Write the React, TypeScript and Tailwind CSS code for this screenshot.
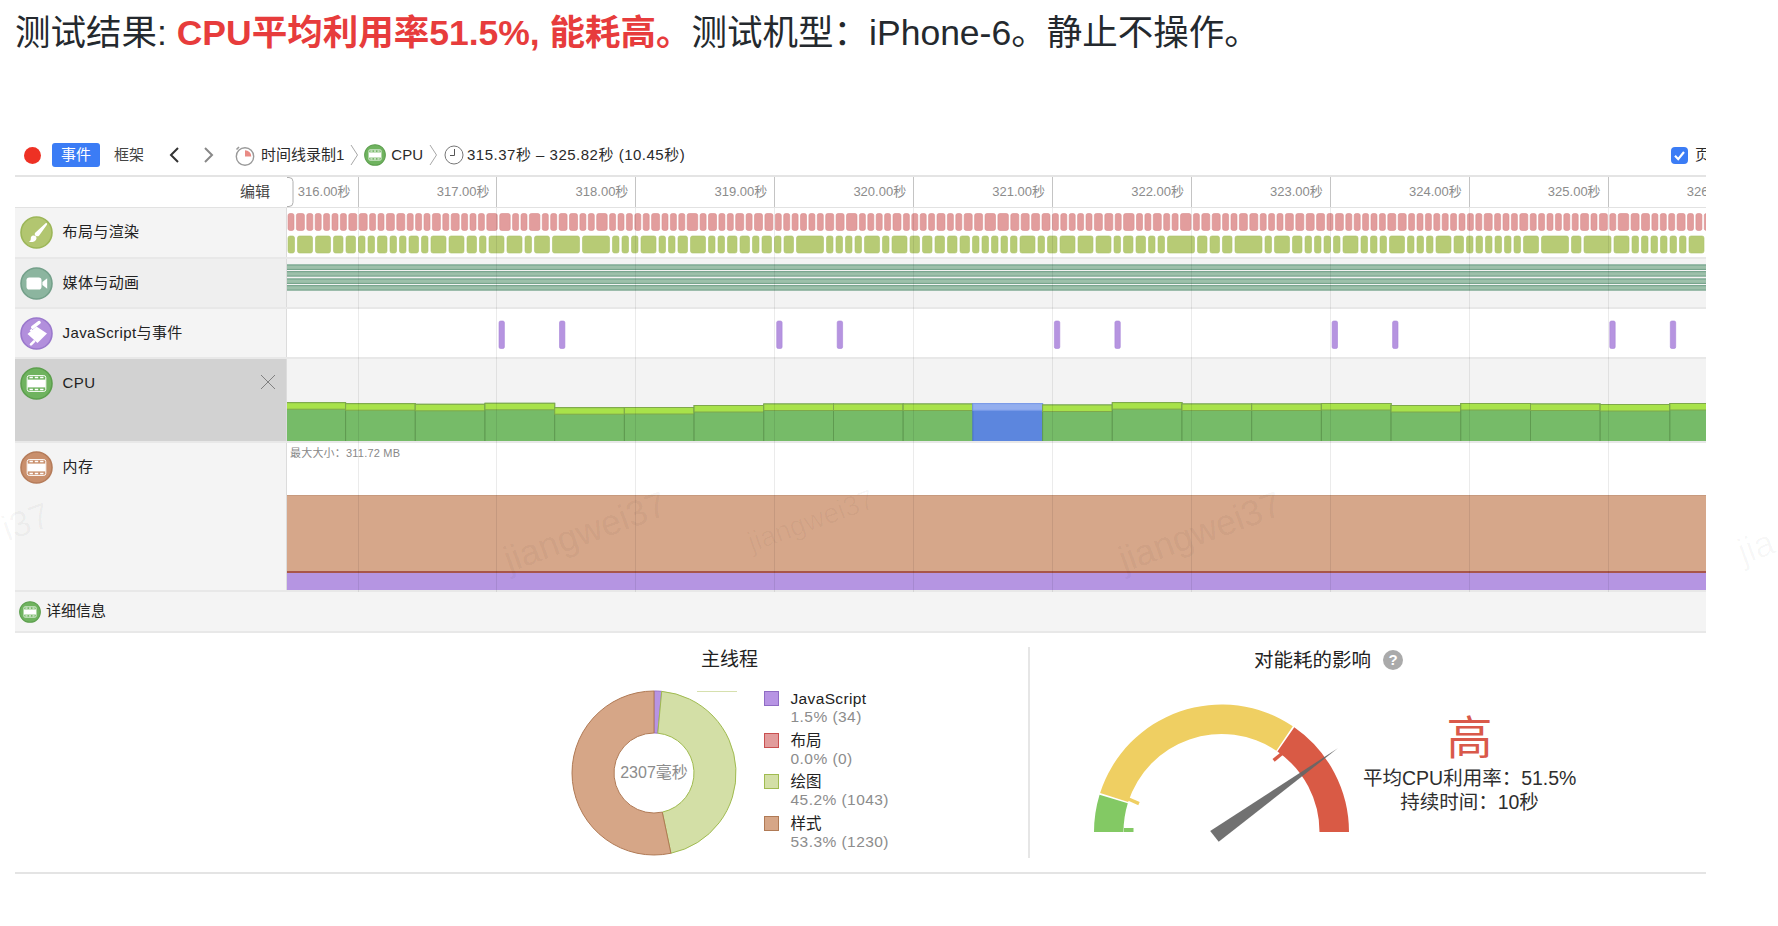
import React from 'react';

const TICKS = [71.6, 210.5, 349.4, 488.3, 627.2, 766.1, 905, 1043.9, 1182.8, 1321.7];
const TIME_LABELS = ['317.00秒', '318.00秒', '319.00秒', '320.00秒', '321.00秒', '322.00秒', '323.00秒', '324.00秒', '325.00秒', '326.00秒'];
const CPU_TOPS = [43.7, 44.7, 45.3, 44.3, 48.7, 48.5, 46.5, 45, 45, 45, 44.7, 46, 43.6, 45, 45, 44.5, 46.5, 44.5, 45, 45.5, 44.5];
const JS_BARS = [212, 272.5, 489.7, 550.2, 767.4, 827.9, 1045.1, 1105.6, 1322.8, 1383.3];

// stable fake trace, so every run draws the same bars
function makeBars(seed: number, pick: (r: number) => number, gap: number) {
  const bars: { x: number; w: number }[] = [];
  let s = seed;
  let x = 1;
  while (x < 1419) {
    s = (s * 9301 + 49297) % 233280;
    const w = pick(s / 233280);
    bars.push({ x, w });
    x += w + gap;
  }
  return bars;
}

const RED_BARS = makeBars(7, (r) => (r < 0.55 ? 6 : r < 0.9 ? 8 : 10.5), 2.4);
const GREEN_BARS = makeBars(23, (r) => (r < 0.55 ? 6.5 : r < 0.75 ? 9.5 : r < 0.94 ? 15 : 27), 3);

function sector(cx: number, cy: number, r0: number, r1: number, a0: number, a1: number) {
  const p = (r: number, a: number) => {
    const t = (a * Math.PI) / 180;
    return `${(cx + r * Math.cos(t)).toFixed(2)} ${(cy - r * Math.sin(t)).toFixed(2)}`;
  };
  const large = Math.abs(a1 - a0) > 180 ? 1 : 0;
  return `M${p(r1, a0)}A${r1} ${r1} 0 ${large} 1 ${p(r1, a1)}L${p(r0, a1)}A${r0} ${r0} 0 ${large} 0 ${p(r0, a0)}Z`;
}

function FilmIcon({ fill, ring, className }: { fill: string; ring: string; className: string }) {
  return (
    <svg viewBox="0 0 33 33" className={className}>
      <circle cx="16.5" cy="16.5" r="15.5" fill={fill} stroke={ring} strokeWidth="1.6" />
      <rect x="7.2" y="8.6" width="18.6" height="15.8" rx="2" fill="none" stroke="#fff" strokeWidth="1" />
      <rect x="7.5" y="12.6" width="18" height="7.8" fill="#fff" />
      <path d="M9.5 10.6h3.4M14.8 10.6h3.4M20.1 10.6h3.4M9.5 22.4h3.4M14.8 22.4h3.4M20.1 22.4h3.4" stroke="#fff" strokeWidth="1.5" />
    </svg>
  );
}

function BrushIcon() {
  return (
    <svg viewBox="0 0 33 33" className="h-[33px] w-[33px] shrink-0">
      <circle cx="16.5" cy="16.5" r="15.5" fill="#b2c670" stroke="#9cb658" strokeWidth="1.6" />
      <path d="M25.6 7.2c1.2-.6 1.9.3 1.3 1.5L19.2 19.4c-.8 1-2.2 1.3-3.4.5s-1.4-2.2-.6-3.2z" fill="#fff" />
      <path d="M12.8 19.6c2.1-.6 3.9.9 3.7 2.8-.3 2.6-3.6 4.1-7.8 3.5 1.8-.9 2.1-2.1 2.1-3.5 0-1.3.8-2.4 2-2.8z" fill="#fff" />
    </svg>
  );
}

function VideoIcon() {
  return (
    <svg viewBox="0 0 33 33" className="h-[33px] w-[33px] shrink-0">
      <circle cx="16.5" cy="16.5" r="15.5" fill="#8cb59f" stroke="#74a08a" strokeWidth="1.6" />
      <rect x="6.5" y="10.5" width="15" height="12" rx="2.8" fill="#fff" />
      <path d="M22.4 15l4.8-3.8v10.6l-4.8-3.8z" fill="#fff" />
    </svg>
  );
}

function ScrollIcon() {
  return (
    <svg viewBox="0 0 33 33" className="h-[33px] w-[33px] shrink-0">
      <circle cx="16.5" cy="16.5" r="15.5" fill="#b28fdc" stroke="#9a78cc" strokeWidth="1.6" />
      <path d="M7.5 17L16.5 9.5l10.5 7-9.5 9.5z" fill="#fff" />
      <path d="M12.6 10.4l6.6-5" stroke="#fff" strokeWidth="3.2" strokeLinecap="round" />
      <path d="M10.5 12.6l2.6 2.6" stroke="#fff" strokeWidth="2.4" />
      <path d="M11 27.4l3-3" stroke="#fff" strokeWidth="2.6" strokeLinecap="round" />
    </svg>
  );
}

function CrumbArrow() {
  return (
    <svg viewBox="0 0 9 22" className="h-[22px] w-[9px] shrink-0">
      <path d="M1 1l6.5 10L1 21" fill="none" stroke="#a8a8a8" strokeWidth="1" />
    </svg>
  );
}

function Toolbar() {
  return (
    <div className="flex h-[46px] items-center border-b-2 border-[#e4e4e4] pt-[4px] text-[15px] text-[#2a2a2a]">
      <span className="ml-[9px] h-[17px] w-[17px] shrink-0 rounded-full bg-[#ee3124]" />
      <span className="ml-[11px] flex h-[24px] w-[48px] items-center justify-center rounded-[3px] bg-[#3b7cf5] text-white">事件</span>
      <span className="ml-[14px] text-[#444]">框架</span>
      <svg viewBox="0 0 12 18" className="ml-[24px] h-[18px] w-[12px]">
        <path d="M10 2L3 9l7 7" fill="none" stroke="#333" strokeWidth="2" />
      </svg>
      <svg viewBox="0 0 12 18" className="ml-[23px] h-[18px] w-[12px]">
        <path d="M2 2l7 7-7 7" fill="none" stroke="#888" strokeWidth="2" />
      </svg>
      <svg viewBox="0 0 20 21" className="ml-[20px] h-[21px] w-[20px]">
        <circle cx="10" cy="11.5" r="8.7" fill="#fff" stroke="#9a9a9a" strokeWidth="1.4" />
        <path d="M10 11.5V5.2a6.3 6.3 0 0 1 6.3 6.3z" fill="#e98b85" />
        <path d="M1.5 4.5l2.5-2.5" stroke="#9a9a9a" strokeWidth="1.6" />
      </svg>
      <span className="ml-[6px]">时间线录制1</span>
      <span className="ml-[6px]"><CrumbArrow /></span>
      <FilmIcon fill="#6fb35f" ring="#5c9f4d" className="ml-[5px] h-[22px] w-[22px] shrink-0" />
      <span className="ml-[5px]">CPU</span>
      <span className="ml-[6px]"><CrumbArrow /></span>
      <svg viewBox="0 0 20 20" className="ml-[6px] h-[20px] w-[20px]">
        <circle cx="10" cy="10" r="9" fill="#fff" stroke="#777" strokeWidth="1" />
        <path d="M10.5 4v6.5H6" fill="none" stroke="#555" strokeWidth="1" />
      </svg>
      <span className="ml-[3px] tracking-[0.5px]">315.37秒 – 325.82秒 (10.45秒)</span>
      <svg viewBox="0 0 17 17" className="ml-auto h-[17px] w-[17px] shrink-0">
        <rect width="17" height="17" rx="4" fill="#3b7cf5" />
        <path d="M4 8.8l3.2 3.4L13 5" fill="none" stroke="#fff" strokeWidth="2.2" />
      </svg>
      <span className="ml-[7px] w-[11px] overflow-hidden whitespace-nowrap">页面</span>
    </div>
  );
}

function TimeHeader() {
  return (
    <div className="flex h-[31px] border-b border-[#e2e2e2] text-[13px]">
      <div className="flex w-[272px] shrink-0 items-center justify-end pr-[17px] text-[15px] text-[#444]">编辑</div>
      <div className="relative flex min-w-0 flex-1 overflow-hidden text-[#8c8c8c]">
        <div className="flex w-[71.6px] shrink-0 items-center justify-end border-r border-[#c4c4c4] pr-[7px]">316.00秒</div>
        {TIME_LABELS.map((label) => (
          <div key={label} className="flex w-[138.9px] shrink-0 items-center justify-end border-r border-[#c4c4c4] pr-[7px]">{label}</div>
        ))}
        <svg viewBox="0 0 7 30" className="absolute left-0 top-0 h-[30px] w-[7px]">
          <path d="M0 .5h2q4 0 4 4v21q0 4-4 4H0" fill="#fff" stroke="#b0b0b0" />
        </svg>
      </div>
    </div>
  );
}

function Row({ icon, label, selected, track, height, trackBg, leftBg }: {
  icon: React.ReactNode;
  label: string;
  selected?: boolean;
  track: React.ReactNode;
  height: string;
  trackBg: string;
  leftBg: string;
}) {
  return (
    <div className={`flex border-b-2 border-[#e8e8e8] ${height}`}>
      <div className={`relative flex w-[272px] shrink-0 items-start gap-[9.5px] border-r border-[#dcdcdc] pl-[5px] pt-[8px] ${leftBg}`}>
        {icon}
        <span className="pt-[6px] text-[15px] leading-[20px] tracking-[0.4px] text-[#222]">{label}</span>
        {selected && (
          <svg viewBox="0 0 16 16" className="absolute right-[10px] top-[15px] h-[16px] w-[16px]">
            <path d="M1 1l14 14M15 1L1 15" stroke="#808080" strokeWidth="1" />
          </svg>
        )}
      </div>
      <div className={`relative min-w-0 flex-1 overflow-hidden ${trackBg}`}>{track}</div>
    </div>
  );
}

function RenderTrack() {
  return (
    <svg viewBox="0 0 1419 49" className="block h-[49px] w-[1419px]">
      {RED_BARS.map((b) => (
        <rect key={b.x} x={b.x} y="5.5" width={b.w} height="17" rx="2" fill="#e29d9d" stroke="#d98d8d" strokeWidth=".6" />
      ))}
      {GREEN_BARS.map((b) => (
        <rect key={b.x} x={b.x} y="28" width={b.w} height="17" rx="2" fill="#b7cb75" stroke="#adc26b" strokeWidth=".6" />
      ))}
    </svg>
  );
}

function MediaTrack() {
  return (
    <svg viewBox="0 0 1419 48" className="block h-[48px] w-[1419px]">
      {[5.5, 12.2, 19.5, 26.2].map((y) => (
        <g key={y}>
          <rect x="0" y={y} width="1419" height="5" fill="#9dc0aa" />
          <rect x="0" y={y} width="1419" height="1" fill="#6f9f87" />
          <rect x="0" y={y + 4.4} width="1419" height="1" fill="#6f9f87" />
        </g>
      ))}
    </svg>
  );
}

function ScriptTrack() {
  return (
    <svg viewBox="0 0 1419 48" className="block h-[48px] w-[1419px]">
      {JS_BARS.map((x) => (
        <rect key={x} x={x} y="12" width="5.4" height="27.5" rx="1.6" fill="#b694e0" stroke="#a884d8" strokeWidth=".6" />
      ))}
    </svg>
  );
}

function CpuTrack() {
  return (
    <svg viewBox="0 0 1419 82" className="block h-[82px] w-[1419px]">
      {CPU_TOPS.map((top, i) => {
        const x = 58.6 + 69.7 * (i - 1);
        const blue = i === 10;
        return (
          <g key={i} stroke={blue ? '#4a72d8' : '#5f9a50'} strokeWidth="1">
            <rect x={x} y={top} width="69.7" height={83 - top} fill={blue ? '#5c86de' : '#76bb68'} />
            <rect x={x} y={top} width="69.7" height="6.5" fill={blue ? '#93aeee' : '#a8e24a'} stroke={blue ? '#7f9eea' : '#7fa84a'} />
          </g>
        );
      })}
    </svg>
  );
}

function MemoryTrack() {
  return (
    <>
      <div className="pl-[3px] pt-[3px] text-[11px] leading-[15px] tracking-[0.2px] text-[#888]">最大大小：311.72 MB</div>
      <div className="mt-[34px] h-[76px] border-t border-[#c79a7e] bg-[#d6a78a]" />
      <div className="h-[2px] bg-[#a8564a]" />
      <div className="h-[18px] bg-[#b595e2]" />
    </>
  );
}

function MainThread() {
  const legend = [
    { name: 'JavaScript', value: '1.5% (34)', swatch: 'border-[#8f6cc4] bg-[#b794e4]', name2: 'tracking-[0.35px]' },
    { name: '布局', value: '0.0% (0)', swatch: 'border-[#c95050] bg-[#e29c9c]', name2: '' },
    { name: '绘图', value: '45.2% (1043)', swatch: 'border-[#a0bb50] bg-[#d3dfa6]', name2: '' },
    { name: '样式', value: '53.3% (1230)', swatch: 'border-[#b07a55] bg-[#d6a687]', name2: '' },
  ];
  return (
    <div className="h-full w-[1013px] shrink-0 pt-[15px]">
      <div className="h-[24px] pl-[686px] text-[19px] leading-[24px] text-[#222]">主线程</div>
      <div className="mt-[18px] flex pl-[555px]">
        <div className="relative h-[168px] w-[172px] shrink-0">
          <svg viewBox="0 0 172 168" className="h-[168px] w-[172px]">
            <path d={sector(84, 83, 40, 82, 90, 84.6)} fill="#b794e4" stroke="#9a72c8" />
            <path d={sector(84, 83, 40, 82, 84.6, -78.1)} fill="#d3dfa6" stroke="#a0bb50" />
            <path d={sector(84, 83, 40, 82, -78.1, -270)} fill="#d6a687" stroke="#b07a55" />
            <path d="M127 1.5h40" stroke="#d6e0ae" />
          </svg>
          <span className="absolute left-[44px] top-[73px] w-[80px] text-center text-[16px] leading-[20px] text-[#8c8c8c]">2307毫秒</span>
        </div>
        <div className="ml-[22px] w-[200px]">
          {legend.map((item) => (
            <div key={item.name} className="flex h-[41.6px] gap-[11.5px]">
              <span className={`mt-[1px] h-[15px] w-[15px] shrink-0 border-[1.5px] ${item.swatch}`} />
              <div className="text-[15.5px] leading-[18px]">
                <div className={`text-[#222] ${item.name2}`}>{item.name}</div>
                <div className="tracking-[0.45px] text-[#8c8c8c]">{item.value}</div>
              </div>
            </div>
          ))}
        </div>
      </div>
    </div>
  );
}

function EnergyImpact() {
  return (
    <div className="h-full min-w-0 flex-1 pt-[15px]">
      <div className="flex h-[24px] items-center pl-[224px]">
        <span className="text-[19.5px] leading-[24px] text-[#222]">对能耗的影响</span>
        <span className="ml-[12px] flex h-[20px] w-[20px] items-center justify-center rounded-full bg-[#aaaaaa] text-[15px] font-bold text-white">?</span>
      </div>
      <div className="mt-[29px] flex pl-[60px]">
        <svg viewBox="0 0 262 145" className="h-[145px] w-[262px] shrink-0">
          <path d={sector(131.5, 131, 98, 127.5, 180, 163)} fill="#83c964" />
          <path d={sector(131.5, 131, 98, 127.5, 162.2, 56)} fill="#efcf62" />
          <path d={sector(131.5, 131, 98, 127.5, 55.2, 0)} fill="#d95a45" />
          <rect x="34" y="127" width="9.5" height="4" fill="#83c964" />
          <path d="M38.5 98l10.5 4.6" stroke="#efcf62" strokeWidth="3.5" />
          <path d="M192 52.5l-8.4 6.8" stroke="#d95a45" strokeWidth="3.5" />
          <path d="M247.8 47.3L120.2 130l8.5 10.7z" fill="#666" fillOpacity=".93" />
        </svg>
        <div className="ml-[11px] w-[213px] pt-[15px] text-center text-[19.5px] leading-[24px] text-[#2e2e2e]">
          <div className="h-[50px] text-[46px] leading-[44px] text-[#d9594a]">高</div>
          <div className="whitespace-nowrap">平均CPU利用率：51.5%</div>
          <div className="whitespace-nowrap">持续时间：10秒</div>
        </div>
      </div>
    </div>
  );
}

const WATERMARKS = [
  { text: 'jiangwei37', cls: 'left-[500px] top-[505px] text-[36px] text-black/[0.05]' },
  { text: 'jiangwei37', cls: 'left-[745px] top-[500px] text-[28px] text-black/[0.03]' },
  { text: 'jiangwei37', cls: 'left-[1115px] top-[505px] text-[36px] text-black/[0.05]' },
  { text: 'jia', cls: 'left-[1738px] top-[520px] text-[36px] text-black/[0.03]' },
  { text: 'i37', cls: 'left-[2px] top-[495px] text-[36px] text-black/[0.035]' },
  { text: 'wei37dengshuhai17-701687', cls: 'left-[40px] top-[430px] text-[24px] text-black/[0.025]' },
  { text: 'dengshuhai17-701687', cls: 'left-[1310px] top-[700px] text-[24px] text-black/[0.015]' },
  { text: 'jiangwei37-701687', cls: 'left-[840px] top-[690px] text-[28px] text-black/[0.015]' },
];

export default function App() {
  return (
    <div className="relative h-[926px] w-[1778px] overflow-hidden bg-white px-[15px] font-['Liberation_Sans','Noto_Sans_CJK_SC',sans-serif]">
      {/* Heading */}
      <h1 className="h-[131px] pt-[12px] text-[35.5px] font-normal leading-[42px] text-[#24292e]">
        测试结果: <strong className="font-bold text-[#e73c3c]">CPU平均利用率51.5%, 能耗高。</strong>测试机型：iPhone-6。静止不操作。
      </h1>

      {/* Timeline panel */}
      <div className="w-[1691px]">
        <Toolbar />
        <div className="relative">
          <TimeHeader />
          <Row icon={<BrushIcon />} label="布局与渲染" height="h-[51px]" leftBg="bg-[#f4f4f4]" trackBg="bg-white" track={<RenderTrack />} />
          <Row icon={<VideoIcon />} label="媒体与动画" height="h-[50px]" leftBg="bg-[#efefef]" trackBg="bg-[#f3f3f3]" track={<MediaTrack />} />
          <Row icon={<ScrollIcon />} label="JavaScript与事件" height="h-[50px]" leftBg="bg-[#f4f4f4]" trackBg="bg-white" track={<ScriptTrack />} />
          <Row icon={<FilmIcon fill="#6fb35f" ring="#5c9f4d" className="h-[33px] w-[33px] shrink-0" />} label="CPU" selected height="h-[84px]" leftBg="bg-[#d2d2d2]" trackBg="bg-[#f3f3f3]" track={<CpuTrack />} />
          <Row icon={<FilmIcon fill="#c98f6c" ring="#b57c5a" className="h-[33px] w-[33px] shrink-0" />} label="内存" height="h-[149px]" leftBg="bg-[#f4f4f4]" trackBg="bg-white" track={<MemoryTrack />} />
          {/* second gridlines run through every track */}
          <div className="pointer-events-none absolute bottom-0 left-[272px] right-0 top-[31px] flex">
            <div className="w-[71.6px] shrink-0 border-r border-black/[0.08]" />
            {TICKS.slice(1).map((t) => (
              <div key={t} className="w-[138.9px] shrink-0 border-r border-black/[0.08]" />
            ))}
          </div>
        </div>

        {/* Details bar */}
        <div className="flex h-[41px] items-center gap-[5px] border-b-2 border-[#e8e8e8] bg-[#f4f4f4] pl-[4px]">
          <FilmIcon fill="#6fb35f" ring="#5c9f4d" className="h-[22px] w-[22px] shrink-0" />
          <span className="text-[15px] text-[#222]">详细信息</span>
        </div>

        {/* Bottom summary */}
        <div className="flex h-[241px] border-b-2 border-[#e4e4e4]">
          <MainThread />
          <div className="my-[14px] w-[2px] shrink-0 bg-[#e6e6e6]" />
          <EnergyImpact />
        </div>
      </div>

      {/* Watermark */}
      {WATERMARKS.map((w) => (
        <span key={w.text + w.cls} className={`pointer-events-none absolute -rotate-[20deg] whitespace-nowrap ${w.cls}`}>{w.text}</span>
      ))}
    </div>
  );
}
